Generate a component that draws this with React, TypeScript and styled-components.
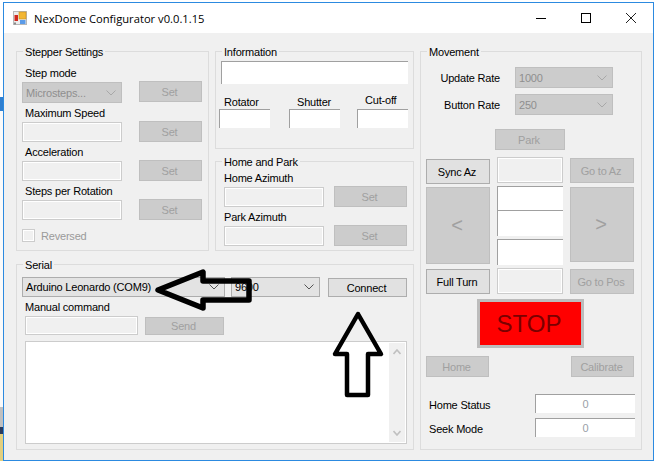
import React from 'react'
import styled, { createGlobalStyle } from 'styled-components'

const GlobalStyle = createGlobalStyle`
  * { box-sizing: border-box; }
  body {
    margin: 0;
    background: #ffffff;
    font-family: "Liberation Sans", Arial, sans-serif;
    font-size: 11px;
    letter-spacing: -0.2px;
    color: #000000;
  }
`

const Chevron = ({ color = '#606060' }: { color?: string }) => (
  <svg width="10" height="6" viewBox="0 0 10 6">
    <path d="M0.5 0.5 L5 5 L9.5 0.5" fill="none" stroke={color} strokeWidth="1" />
  </svg>
)

const AppIcon = () => (
  <svg width="14" height="14" viewBox="0 0 14 14">
    <rect x="0" y="0" width="14" height="14" fill="#b8b8b8" />
    <rect x="1" y="1" width="12" height="12" fill="#ececec" />
    <rect x="6" y="1" width="7" height="7" fill="#f2b632" stroke="#c98f1c" strokeWidth="0.6" />
    <rect x="1.5" y="4" width="3.5" height="6" fill="#d0281e" />
    <rect x="7" y="9" width="5.5" height="4" fill="#5b9be8" />
    <rect x="1" y="11.5" width="2" height="2" fill="#8a8a8a" />
  </svg>
)

const Combo = ({
  text,
  $width,
  $height,
  disabled
}: {
  text: string
  $width: number
  $height?: number
  disabled?: boolean
}) => (
  <ComboBox $width={$width} $height={$height} $disabled={disabled}>
    <span>{text}</span>
    <Chevron color={disabled ? '#a8a8a8' : '#555555'} />
  </ComboBox>
)

const App = () => {
  const setBlock = (label: string, combo?: boolean) => (
    <FieldBlock $gap={17}>
      <FieldStack>
        <FieldLabel $indent={3}>{label}</FieldLabel>
        {combo ? <Combo text="Microsteps..." $width={100} disabled /> : <DisabledInput $width={100} disabled />}
      </FieldStack>
      <FlatButton $width={63} $height={21} $lift={combo ? 1 : 0} disabled>
        Set
      </FlatButton>
    </FieldBlock>
  )

  return (
    <Page>
      <GlobalStyle />
      <DesktopStrip>
        <StripPiece $height={95} $color="#ffffff" />
        <StripPiece $height={14} $color="#2f7fd0" />
        <StripPiece $height={296} $color="#fafafa" />
        <StripPiece $height={20} $color="#c0c0c0" />
        <StripPiece $height={7} $color="#2b3a5c" />
        <StripPiece $height={27} $color="#e3cf7e" />
      </DesktopStrip>
      <Window>
        <TitleBar>
          <TitleLeft>
            <AppIcon />
            <TitleText>NexDome Configurator v0.0.1.15</TitleText>
          </TitleLeft>
          <WindowControls>
            <svg width="10" height="10" viewBox="0 0 10 10">
              <path d="M0 5.5 H10" stroke="#000" strokeWidth="1" />
            </svg>
            <svg width="10" height="10" viewBox="0 0 10 10">
              <rect x="0.5" y="0.5" width="9" height="9" fill="none" stroke="#000" strokeWidth="1" />
            </svg>
            <svg width="10" height="10" viewBox="0 0 10 10">
              <path d="M0 0 L10 10 M10 0 L0 10" stroke="#222" strokeWidth="1" />
            </svg>
          </WindowControls>
        </TitleBar>
        <Body>
          <LeftColumn>
            <TopGroups>
              <GroupBox $width={193}>
                <Legend>Stepper Settings</Legend>
                <StepperInner>
                  {setBlock('Step mode', true)}
                  {setBlock('Maximum Speed')}
                  {setBlock('Acceleration')}
                  {setBlock('Steps per Rotation')}
                  <CheckRow>
                    <CheckBox />
                    <DisabledText>Reversed</DisabledText>
                  </CheckRow>
                </StepperInner>
              </GroupBox>
              <GroupColumn>
                <GroupBox $height={98}>
                  <Legend>Information</Legend>
                  <InfoInner>
                    <SunkenBox $width={187} $height={23} $indent={2} />
                    <InfoGrid>
                      <InfoCell>
                        <FieldLabel $indent={5}>Rotator</FieldLabel>
                        <SunkenBox $width={51} $height={19} />
                      </InfoCell>
                      <InfoCell>
                        <FieldLabel $indent={8}>Shutter</FieldLabel>
                        <SunkenBox $width={51} $height={19} />
                      </InfoCell>
                      <InfoCell>
                        <FieldLabel $indent={8} $raise={2}>
                          Cut-off
                        </FieldLabel>
                        <SunkenBox $width={51} $height={19} />
                      </InfoCell>
                    </InfoGrid>
                  </InfoInner>
                </GroupBox>
                <GroupBox $grow>
                  <Legend>Home and Park</Legend>
                  <HomeInner>
                    <FieldBlock $gap={10}>
                      <FieldStack>
                        <FieldLabel>Home Azimuth</FieldLabel>
                        <DisabledInput $width={100} disabled />
                      </FieldStack>
                      <FlatButton $width={73} $height={21} disabled>
                        Set
                      </FlatButton>
                    </FieldBlock>
                    <FieldBlock $gap={10}>
                      <FieldStack>
                        <FieldLabel>Park Azimuth</FieldLabel>
                        <DisabledInput $width={100} disabled />
                      </FieldStack>
                      <FlatButton $width={73} $height={21} disabled>
                        Set
                      </FlatButton>
                    </FieldBlock>
                  </HomeInner>
                </GroupBox>
              </GroupColumn>
            </TopGroups>
            <GroupBox $height={186}>
              <Legend>Serial</Legend>
              <SerialInner>
                <SerialRow>
                  <Combo text="Arduino Leonardo (COM9)" $width={203} $height={20} />
                  <Combo text="9600" $width={89} $height={20} />
                  <FlatButton $width={79} $height={19} $active $gapLeft={2}>
                    Connect
                  </FlatButton>
                </SerialRow>
                <ManualLabel>Manual command</ManualLabel>
                <SendRow>
                  <DisabledInput $width={113} $height={19} disabled />
                  <FlatButton $width={79} $height={18} disabled>
                    Send
                  </FlatButton>
                </SendRow>
                <LogBox>
                  <ScrollBar>
                    <svg width="8" height="6" viewBox="0 0 8 6">
                      <path d="M0.5 5 L4 1 L7.5 5" fill="none" stroke="#c0c0c0" strokeWidth="1.6" />
                    </svg>
                    <svg width="8" height="6" viewBox="0 0 8 6">
                      <path d="M0.5 1 L4 5 L7.5 1" fill="none" stroke="#c0c0c0" strokeWidth="1.6" />
                    </svg>
                  </ScrollBar>
                </LogBox>
              </SerialInner>
              <LeftArrow viewBox="155 268 97 44" width="97" height="44">
                <path
                  d="M158 290 L203 272 L203 281 L249 281 L249 300 L203 300 L203 308 Z"
                  fill="none"
                  stroke="#000"
                  strokeWidth="5.5"
                  strokeLinejoin="round"
                />
              </LeftArrow>
              <UpArrow viewBox="330 310 56 90" width="56" height="90">
                <path
                  d="M358 314 L381 354 L368 354 L368 395 L347 395 L347 354 L335 354 Z"
                  fill="none"
                  stroke="#000"
                  strokeWidth="4.5"
                  strokeLinejoin="round"
                />
              </UpArrow>
            </GroupBox>
          </LeftColumn>
          <GroupBox $width={222} $height={399}>
            <Legend>Movement</Legend>
            <MovementInner>
              <RateRow>
                <RateLabel>Update Rate</RateLabel>
                <Combo text="1000" $width={98} disabled />
              </RateRow>
              <RateRow>
                <RateLabel>Button Rate</RateLabel>
                <Combo text="250" $width={98} disabled />
              </RateRow>
              <ParkRow>
                <FlatButton $width={70} $height={21} disabled>
                  Park
                </FlatButton>
              </ParkRow>
              <MoveGrid>
                <MoveColumn $top={2}>
                  <FlatButton $width={64} $height={25} $active>
                    Sync Az
                  </FlatButton>
                  <FlatButton $width={64} $height={77} $big $gapTop={3} disabled>
                    &lt;
                  </FlatButton>
                  <FlatButton $width={64} $height={25} $active $gapTop={5}>
                    Full Turn
                  </FlatButton>
                </MoveColumn>
                <MoveColumn>
                  <DisabledInput $width={66} $height={26} disabled />
                  <SunkenBox $width={66} $height={24} $top={3} />
                  <SunkenBox $width={66} $height={26} />
                  <SunkenBox $width={66} $height={26} $top={3} />
                  <DisabledInput $width={66} $height={26} $top={3} disabled />
                </MoveColumn>
                <MoveColumn $top={1}>
                  <FlatButton $width={64} $height={25} disabled>
                    Go to Az
                  </FlatButton>
                  <FlatButton $width={64} $height={75} $big $gapTop={4} disabled>
                    &gt;
                  </FlatButton>
                  <FlatButton $width={64} $height={25} $gapTop={7} disabled>
                    Go to Pos
                  </FlatButton>
                </MoveColumn>
              </MoveGrid>
              <StopButton>STOP</StopButton>
              <HomeRow>
                <FlatButton $width={63} $height={21} disabled>
                  Home
                </FlatButton>
                <FlatButton $width={63} $height={21} disabled>
                  Calibrate
                </FlatButton>
              </HomeRow>
              <StatusList>
                <StatusRow>
                  <StatusLabel>Home Status</StatusLabel>
                  <StatusBox>0</StatusBox>
                </StatusRow>
                <StatusRow>
                  <StatusLabel>Seek Mode</StatusLabel>
                  <StatusBox>0</StatusBox>
                </StatusRow>
              </StatusList>
            </MovementInner>
          </GroupBox>
        </Body>
      </Window>
    </Page>
  )
}

const Page = styled.div`
  width: 655px;
  height: 461px;
  display: flex;
  overflow: hidden;
  background: #ffffff;
  padding-top: 2px;
`
const DesktopStrip = styled.div`
  width: 3px;
  flex: none;
  display: flex;
  flex-direction: column;
`
const StripPiece = styled.div<{ $height: number; $color: string }>`
  height: ${(p) => p.$height}px;
  background: ${(p) => p.$color};
`
const Window = styled.div`
  width: 651px;
  height: 459px;
  flex: none;
  border: 1px solid #2c8ae0;
  background: #f0f0f0;
  display: flex;
  flex-direction: column;
`
const TitleBar = styled.div`
  height: 30px;
  flex: none;
  background: #ffffff;
  display: flex;
  align-items: center;
  justify-content: space-between;
  padding-left: 9px;
`
const TitleLeft = styled.div`
  display: flex;
  align-items: center;
  gap: 7px;
`
const TitleText = styled.span`
  font-family: "Open Sans", "Noto Sans", sans-serif;
  font-size: 11.2px;
  letter-spacing: 0;
  color: #000000;
`
const WindowControls = styled.div`
  display: flex;
  align-items: center;
  gap: 35px;
  padding-right: 17px;
`
const Body = styled.div`
  display: flex;
  gap: 6px;
  padding: 18px 0 0 12px;
`
const LeftColumn = styled.div`
  width: 398px;
  display: flex;
  flex-direction: column;
  gap: 13px;
`
const TopGroups = styled.div`
  height: 200px;
  display: flex;
  gap: 6px;
`
const GroupColumn = styled.div`
  width: 199px;
  display: flex;
  flex-direction: column;
  gap: 12px;
`
const GroupBox = styled.div<{ $width?: number; $height?: number; $grow?: boolean }>`
  position: relative;
  border: 1px solid #dcdcdc;
  ${(p) => (p.$width ? `width: ${p.$width}px;` : '')}
  ${(p) => (p.$height ? `height: ${p.$height}px;` : '')}
  ${(p) => (p.$grow ? 'flex: 1;' : '')}
`
const Legend = styled.span`
  position: absolute;
  top: -7px;
  left: 6px;
  padding: 0 2px;
  background: #f0f0f0;
  line-height: 14px;
  white-space: nowrap;
`
const StepperInner = styled.div`
  padding: 14px 0 0 5px;
  display: flex;
  flex-direction: column;
  gap: 3px;
`
const FieldBlock = styled.div<{ $gap: number }>`
  display: flex;
  align-items: flex-end;
  gap: ${(p) => p.$gap}px;
`
const FieldStack = styled.div`
  display: flex;
  flex-direction: column;
  gap: 2px;
`
const FieldLabel = styled.span<{ $indent?: number; $raise?: number }>`
  display: block;
  height: 14px;
  line-height: 14px;
  margin-left: ${(p) => p.$indent ?? 0}px;
  margin-bottom: ${(p) => p.$raise ?? 0}px;
  white-space: nowrap;
`
const DisabledInput = styled.input<{ $width: number; $height?: number; $top?: number }>`
  display: block;
  width: ${(p) => p.$width}px;
  height: ${(p) => p.$height ?? 20}px;
  margin: ${(p) => p.$top ?? 0}px 0 0;
  padding: 0;
  flex: none;
  background: #f0f0f0;
  border: 1px solid #cccccc;
  box-shadow: inset 0 0 0 1px #ffffff;
  outline: none;
`
const SunkenBox = styled.div<{ $width: number; $height: number; $indent?: number; $top?: number }>`
  width: ${(p) => p.$width}px;
  height: ${(p) => p.$height}px;
  margin-left: ${(p) => p.$indent ?? 0}px;
  margin-top: ${(p) => p.$top ?? 0}px;
  flex: none;
  background: #ffffff;
  border-top: 1px solid #a0a0a0;
  border-left: 1px solid #a0a0a0;
`
const FlatButton = styled.button<{
  $width: number
  $height: number
  $active?: boolean
  $big?: boolean
  $lift?: number
  $gapTop?: number
  $gapLeft?: number
}>`
  width: ${(p) => p.$width}px;
  height: ${(p) => p.$height}px;
  margin: ${(p) => p.$gapTop ?? 0}px 0 ${(p) => p.$lift ?? 0}px ${(p) => p.$gapLeft ?? 0}px;
  padding: 0 2px 0 0;
  flex: none;
  font-family: inherit;
  font-size: ${(p) => (p.$big ? '20px' : '11px')};
  letter-spacing: inherit;
  background: ${(p) => (p.$active ? '#e1e1e1' : '#cccccc')};
  border: 1px solid ${(p) => (p.$active ? '#adadad' : '#bfbfbf')};
  color: ${(p) => (p.$active ? '#000000' : '#a0a0a0')};
`
const ComboBox = styled.div<{ $width: number; $height?: number; $disabled?: boolean }>`
  width: ${(p) => p.$width}px;
  height: ${(p) => p.$height ?? 21}px;
  flex: none;
  display: flex;
  align-items: center;
  justify-content: space-between;
  padding: 0 5px 0 3px;
  background: ${(p) => (p.$disabled ? '#cccccc' : '#e3e3e3')};
  border: 1px solid ${(p) => (p.$disabled ? '#bfbfbf' : '#adadad')};
  color: ${(p) => (p.$disabled ? '#8f8f8f' : '#000000')};
  white-space: nowrap;
`
const CheckRow = styled.div`
  display: flex;
  align-items: center;
  gap: 6px;
  margin-top: 6px;
`
const CheckBox = styled.div`
  width: 13px;
  height: 13px;
  background: #f0f0f0;
  border: 1px solid #cccccc;
  box-shadow: inset 0 0 0 1px #ffffff;
`
const DisabledText = styled.span`
  color: #9a9a9a;
`
const InfoInner = styled.div`
  padding: 9px 0 0 3px;
`
const InfoGrid = styled.div`
  display: grid;
  grid-template-columns: 70px 68px 51px;
  align-items: end;
  margin-top: 9px;
`
const InfoCell = styled.div`
  display: flex;
  flex-direction: column;
`
const HomeInner = styled.div`
  padding: 9px 0 0 8px;
  display: flex;
  flex-direction: column;
  gap: 3px;
`
const SerialInner = styled.div`
  padding: 12px 0 0 5px;
`
const SerialRow = styled.div`
  display: flex;
  align-items: flex-end;
  gap: 6px;
`
const ManualLabel = styled.div`
  height: 14px;
  line-height: 14px;
  margin: 3px 0 2px 3px;
`
const SendRow = styled.div`
  display: flex;
  align-items: flex-end;
  gap: 7px;
  margin-left: 3px;
`
const LogBox = styled.div`
  width: 382px;
  height: 103px;
  margin: 6px 0 0 3px;
  display: flex;
  justify-content: flex-end;
  padding: 1px;
  background: #ffffff;
  border: 1px solid #cccccc;
`
const ScrollBar = styled.div`
  width: 16px;
  height: 100%;
  background: #f0f0f0;
  display: flex;
  flex-direction: column;
  align-items: center;
  justify-content: space-between;
  padding: 6px 0;
`
const LeftArrow = styled.svg`
  position: absolute;
  left: 138px;
  top: 3px;
`
const UpArrow = styled.svg`
  position: absolute;
  left: 313px;
  top: 45px;
`
const MovementInner = styled.div`
  padding: 15px 0 0 5px;
  display: flex;
  flex-direction: column;
`
const RateRow = styled.div`
  display: flex;
  align-items: center;
  gap: 15px;
  margin-bottom: 6px;
`
const RateLabel = styled.span`
  width: 74px;
  text-align: right;
  white-space: nowrap;
`
const ParkRow = styled.div`
  display: flex;
  justify-content: center;
  width: 208px;
  margin-top: 8px;
`
const MoveGrid = styled.div`
  display: flex;
  gap: 7px;
  margin-top: 7px;
`
const MoveColumn = styled.div<{ $top?: number }>`
  display: flex;
  flex-direction: column;
  padding-top: ${(p) => p.$top ?? 0}px;
`
const StopButton = styled.button`
  width: 107px;
  height: 49px;
  margin: 5px 0 0 51px;
  padding: 0 3px 0 0;
  flex: none;
  background: #ff0000;
  border: 3px solid #bcbcbc;
  color: #7a0000;
  font-family: inherit;
  font-size: 24px;
  letter-spacing: 0;
`
const HomeRow = styled.div`
  display: flex;
  justify-content: space-between;
  width: 208px;
  margin-top: 8px;
`
const StatusList = styled.div`
  display: flex;
  flex-direction: column;
  gap: 5px;
  margin-top: 17px;
  width: 209px;
`
const StatusRow = styled.div`
  display: flex;
  align-items: center;
  justify-content: space-between;
`
const StatusLabel = styled.span`
  margin: 2px 0 0 3px;
`
const StatusBox = styled.div`
  width: 100px;
  height: 19px;
  background: #ffffff;
  border-top: 1px solid #a0a0a0;
  border-left: 1px solid #a0a0a0;
  color: #9aa0a8;
  line-height: 18px;
  text-align: center;
`

export default App
